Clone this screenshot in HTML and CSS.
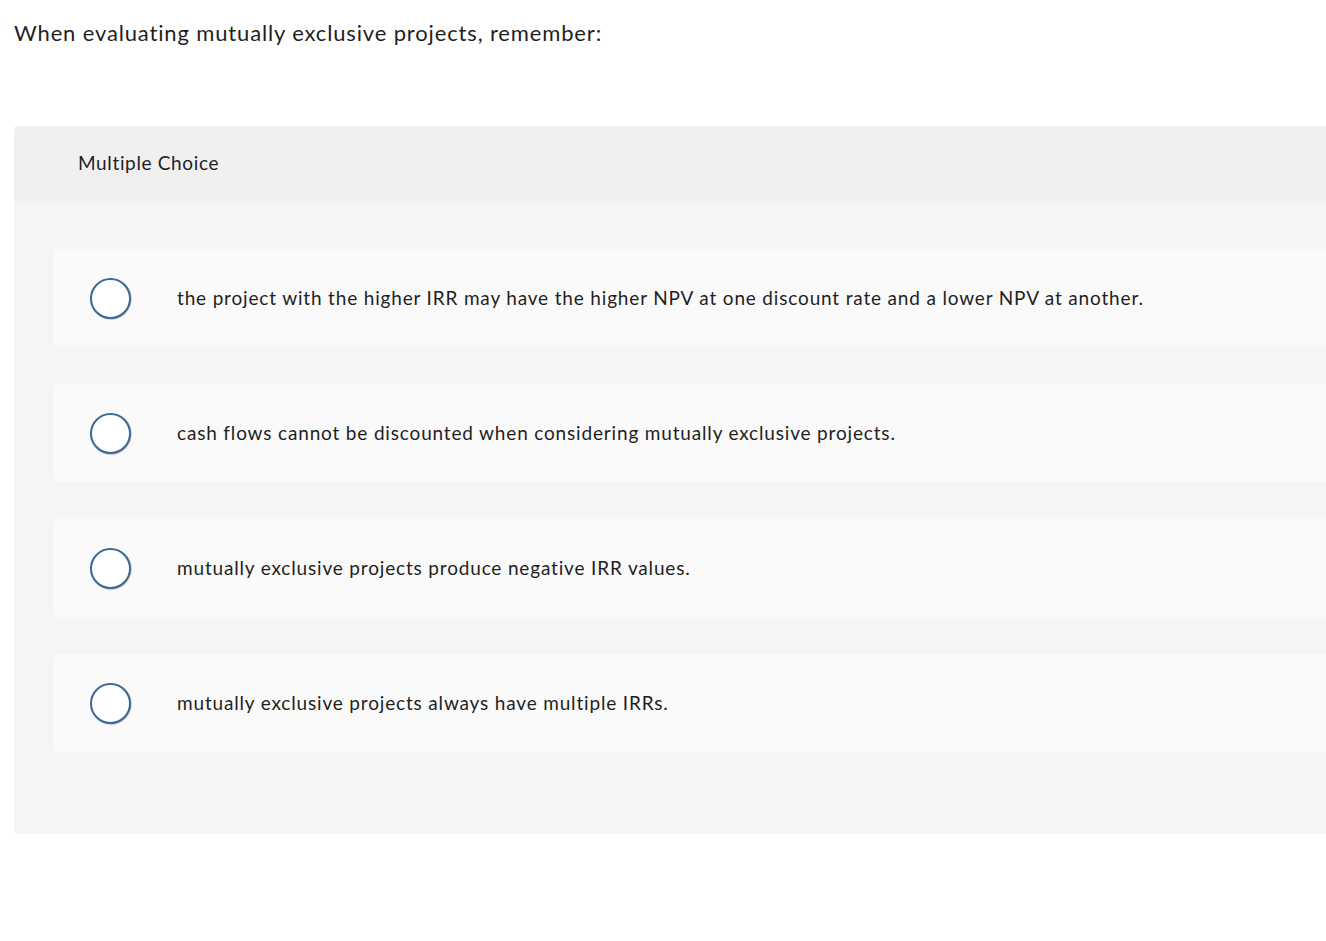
FILE: index.html
```html
<!DOCTYPE html>
<html>
<head>
<meta charset="utf-8">
<link rel="stylesheet" href="styles.css">
</head>
<body>
<div class="page">
  <p class="question">When evaluating mutually exclusive projects, remember:</p>
  <div class="card">
    <div class="card-head">Multiple Choice</div>
    <div class="card-body">
      <div class="option"><span class="radio"></span><span class="label">the project with the higher IRR may have the higher NPV at one discount rate and a lower NPV at another.</span></div>
      <div class="option"><span class="radio"></span><span class="label">cash flows cannot be discounted when considering mutually exclusive projects.</span></div>
      <div class="option"><span class="radio"></span><span class="label">mutually exclusive projects produce negative IRR values.</span></div>
      <div class="option"><span class="radio"></span><span class="label">mutually exclusive projects always have multiple IRRs.</span></div>
    </div>
  </div>
</div>
</body>
</html>
```

FILE: styles.css
```css
html, body {
  margin: 0;
  padding: 0;
  background: #ffffff;
  overflow: hidden;
}
.page {
  padding: 0 0 0 14px;
  font-family: Lato, "Liberation Sans", sans-serif;
  color: #1f1f1f;
}
.question {
  margin: 0;
  padding-top: 19px;
  font-size: 22px;
  line-height: 27px;
  height: 107px;
  letter-spacing: 0.85px;
}
.card {
  width: 1340px;
  background: #f5f5f5;
  border-radius: 4px;
}
.card-head {
  background: #f0f0f0;
  height: 75px;
  box-sizing: border-box;
  padding-left: 64px;
  padding-bottom: 2px;
  display: flex;
  align-items: center;
  font-size: 19px;
  letter-spacing: 0.64px;
  border-radius: 4px 4px 0 0;
}
.card-body {
  padding: 48px 0 82px 39px;
  display: flex;
  flex-direction: column;
  gap: 37px;
}
.option {
  height: 98px;
  background: #fafafa;
  border-radius: 5px;
  display: flex;
  align-items: center;
}
.radio {
  width: 37px;
  height: 37px;
  border: 2px solid #3b6a98;
  border-radius: 50%;
  background: #ffffff;
  margin-left: 37px;
  margin-right: 46px;
  box-shadow: 0.5px 0.5px 1px rgba(0,0,0,0.35);
  flex: none;
}
.label {
  font-size: 19px;
  letter-spacing: 0.83px;
  padding-bottom: 2px;
}
```
